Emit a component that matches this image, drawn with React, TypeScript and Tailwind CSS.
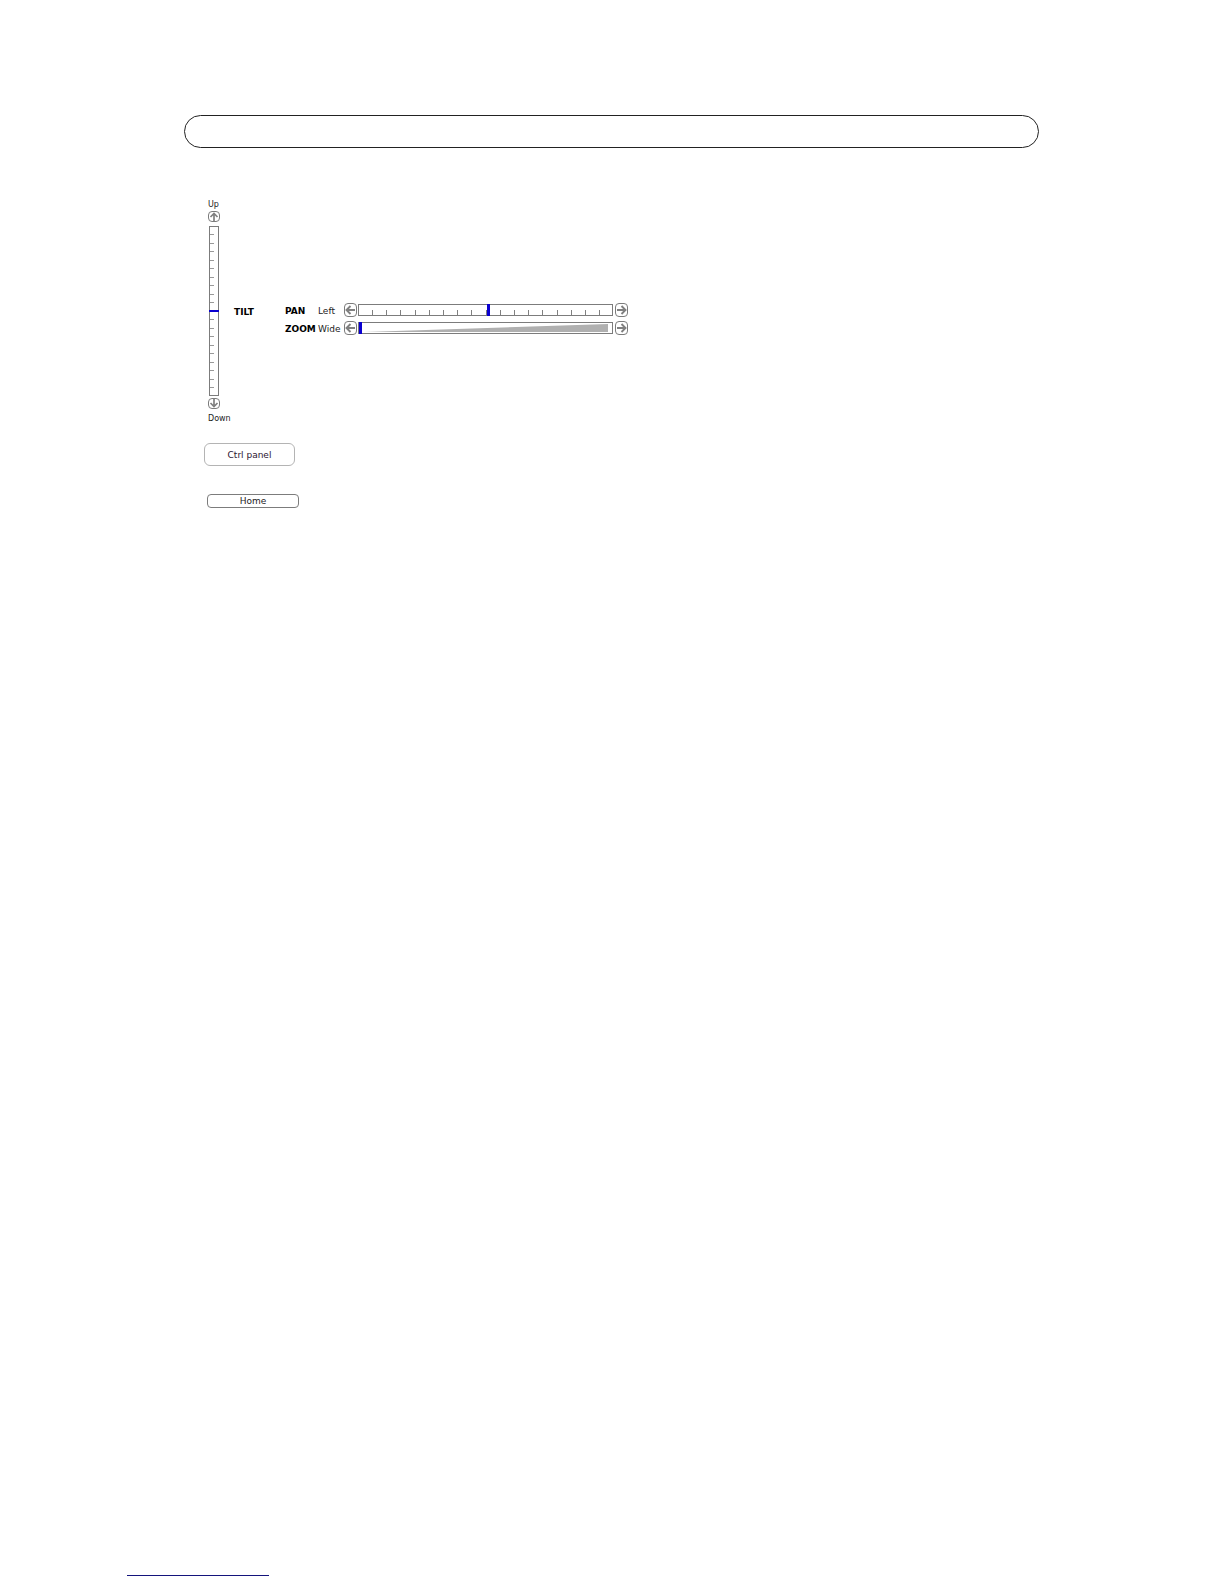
import { useState } from "react";

type Direction = "up" | "down" | "left" | "right";

const arrows: Record<Direction, string> = {
  up: "M5 9V1.5M1.5 5L5 1.5L8.5 5",
  down: "M5 0V7.5M1.5 4L5 7.5L8.5 4",
  left: "M10 6H2M5.5 2L1.5 6L5.5 10",
  right: "M1 6H9M5.5 2L9.5 6L5.5 10",
};

const tiltTicks = Array.from({ length: 19 }, (_, i) => Math.round(7 + i * 8.5));
const panTicks = Array.from({ length: 17 }, (_, i) => Math.round(13 + i * 14.2));

function ArrowButton({ direction, onClick }: { direction: Direction; onClick: () => void }) {
  const vertical = direction === "up" || direction === "down";
  return (
    <button
      type="button"
      aria-label={direction}
      onClick={onClick}
      className={`flex shrink-0 items-center justify-center rounded border border-[#7c7c7c] bg-white ${
        vertical ? "h-[11px] w-[12px]" : "h-[14px] w-[13px]"
      }`}
    >
      <svg
        viewBox={vertical ? "0 0 10 9" : "0 0 11 12"}
        className={vertical ? "h-[9px] w-[10px]" : "h-[12px] w-[11px]"}
        fill="none"
        stroke="#808080"
        strokeWidth={vertical ? 1.7 : 1.9}
      >
        <path d={arrows[direction]} />
      </svg>
    </button>
  );
}

export default function App() {
  const [tilt, setTilt] = useState(50);
  const [pan, setPan] = useState(51);
  const [zoom, setZoom] = useState(0);

  const thumb =
    "[&::-webkit-slider-thumb]:h-[12px] [&::-webkit-slider-thumb]:w-[3px] [&::-webkit-slider-thumb]:appearance-none [&::-webkit-slider-thumb]:bg-[#0a00d0]";

  return (
    <div className="flex min-h-screen flex-col bg-white font-['DejaVu_Sans',Verdana,sans-serif] text-[9px] leading-[12px] text-[#222222]">
      <main className="pt-[115px] pr-[185px] pl-[184px]">
        {/* Title bar */}
        <div className="h-[33px] rounded-full border border-[#222222]" />

        {/* Camera controls */}
        <div className="mt-[51px] flex items-center pl-6">
          <div className="flex w-[26px] shrink-0 flex-col items-start">
            <span className="text-[8px]">Up</span>
            <ArrowButton direction="up" onClick={() => setTilt(Math.min(100, tilt + 5))} />
            <div className="relative mt-1 mb-0.5 ml-px h-[170px] w-[10px] border border-[#7c7c7c]">
              <svg viewBox="0 0 8 168" className="block h-[168px] w-[8px]" shapeRendering="crispEdges">
                {tiltTicks.map((y) => (
                  <rect key={y} x="0" y={y} width="4" height="1" fill="#999999" />
                ))}
              </svg>
              <input
                id="tilt"
                type="range"
                value={tilt}
                onChange={(e) => setTilt(Number(e.target.value))}
                className="absolute inset-0 m-0 h-full w-full appearance-none bg-transparent [direction:rtl] [writing-mode:vertical-lr] [&::-webkit-slider-thumb]:h-[2px] [&::-webkit-slider-thumb]:w-[10px] [&::-webkit-slider-thumb]:appearance-none [&::-webkit-slider-thumb]:bg-[#0a00d0]"
              />
            </div>
            <ArrowButton direction="down" onClick={() => setTilt(Math.max(0, tilt - 5))} />
            <span className="mt-1 text-[8px]">Down</span>
          </div>
          <label htmlFor="tilt" className="w-[51px] shrink-0 font-bold text-black">
            TILT
          </label>

          <div className="flex flex-col gap-1 pt-3.5">
            <div className="flex items-center">
              <label htmlFor="pan" className="w-[33px] shrink-0 pt-0.5 font-bold text-black">
                PAN
              </label>
              <span className="w-[26px] shrink-0 pt-0.5">Left</span>
              <ArrowButton direction="left" onClick={() => setPan(Math.max(0, pan - 5))} />
              <div className="relative mr-0.5 ml-px h-[12px] w-[255px] border border-[#7c7c7c]">
                <svg viewBox="0 0 253 10" className="block h-[10px] w-[253px]" shapeRendering="crispEdges">
                  {panTicks.map((x) => (
                    <rect key={x} x={x} y="5" width="1" height="5" fill="#808080" />
                  ))}
                </svg>
                <input
                  id="pan"
                  type="range"
                  value={pan}
                  onChange={(e) => setPan(Number(e.target.value))}
                  className={`absolute inset-0 m-0 h-full w-full appearance-none bg-transparent ${thumb}`}
                />
              </div>
              <ArrowButton direction="right" onClick={() => setPan(Math.min(100, pan + 5))} />
            </div>

            <div className="flex items-center">
              <label htmlFor="zoom" className="w-[33px] shrink-0 pt-0.5 font-bold text-black">
                ZOOM
              </label>
              <span className="w-[26px] shrink-0 pt-0.5">Wide</span>
              <ArrowButton direction="left" onClick={() => setZoom(Math.max(0, zoom - 5))} />
              <div className="relative mr-0.5 ml-px h-[12px] w-[255px] border border-[#7c7c7c]">
                <svg viewBox="0 0 253 10" className="block h-[10px] w-[253px]">
                  <path d="M6 9L249 1V9Z" fill="#b0b0b0" />
                </svg>
                <input
                  id="zoom"
                  type="range"
                  value={zoom}
                  onChange={(e) => setZoom(Number(e.target.value))}
                  className={`absolute inset-0 m-0 h-full w-full appearance-none bg-transparent ${thumb}`}
                />
              </div>
              <ArrowButton direction="right" onClick={() => setZoom(Math.min(100, zoom + 5))} />
            </div>
          </div>
        </div>

        {/* Buttons */}
        <div className="mt-[18px] flex flex-col items-start gap-7 pl-5">
          <button type="button" className="h-[23px] w-[91px] rounded-md border border-[#b4b4b4] text-[#2c1430]">
            Ctrl panel
          </button>
          <button type="button" className="ml-[3px] h-[14px] w-[92px] rounded border border-[#7c7c7c] leading-[12px]">
            Home
          </button>
        </div>
      </main>

      {/* Footer rule */}
      <footer className="mt-auto px-[127px] pb-2">
        <div className="h-px w-[142px] bg-[#14147c]" />
      </footer>
    </div>
  );
}
